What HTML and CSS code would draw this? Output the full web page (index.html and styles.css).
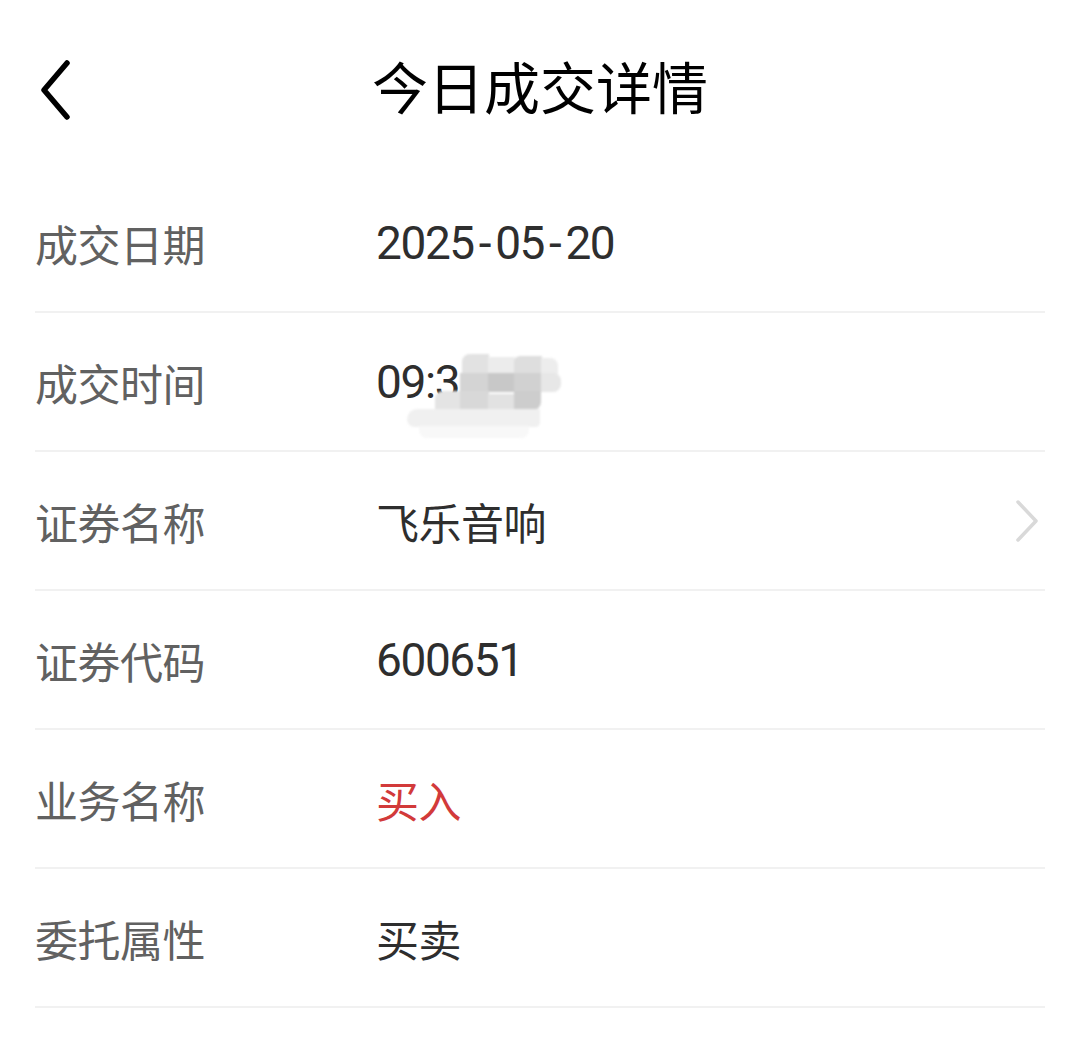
FILE: index.html
```html
<!DOCTYPE html>
<html lang="zh-CN">
<head>
<meta charset="utf-8">
<title>今日成交详情</title>
<link rel="stylesheet" href="styles.css">
</head>
<body>
<div class="page">
  <header class="header">
    <button class="back" aria-label="返回">
      <svg width="40" height="60" viewBox="0 0 40 60"><path d="M31 3 L8 30 L31 57" fill="none" stroke="#000" stroke-width="5.5" stroke-linecap="round" stroke-linejoin="round"/></svg>
    </button>
    <h1 class="title">今日成交详情</h1>
  </header>
  <ul class="list">
    <li class="row"><span class="label">成交日期</span><span class="value num">2025<span class="dash">-</span>05<span class="dash">-</span>20</span></li>
    <li class="row"><span class="label">成交时间</span><span class="value num"><span class="masked">09:3<span class="mosaic" aria-hidden="true">
      <i class="m a1"></i><i class="m a2"></i><i class="m a3"></i><i class="m a4"></i><i class="m b1"></i><i class="m b2"></i><i class="m b3"></i><i class="m b4"></i><i class="m k0"></i><i class="m k1"></i><i class="m k2"></i><i class="m k3"></i><i class="m d1"></i><i class="m e1"></i>
    </span></span></span></li>
    <li class="row"><span class="label">证券名称</span><span class="value">飞乐音响</span>
      <svg class="arrow" width="26" height="44" viewBox="0 0 26 44"><path d="M4 3 L22 22 L4 41" fill="none" stroke="#d9d9d9" stroke-width="3.5" stroke-linecap="round" stroke-linejoin="round"/></svg>
    </li>
    <li class="row"><span class="label">证券代码</span><span class="value num">600651</span></li>
    <li class="row"><span class="label">业务名称</span><span class="value red">买入</span></li>
    <li class="row"><span class="label">委托属性</span><span class="value">买卖</span></li>
  </ul>
</div>
</body>
</html>
```
FILE: styles.css
```css
* { box-sizing: border-box; }
html, body { margin: 0; padding: 0; background: #fff; }
body {
  font-family: "Noto Sans CJK SC", "Noto Sans", sans-serif;
  width: 1080px;
  height: 1037px;
  overflow: hidden;
}
.header {
  position: relative;
  height: 174px;
  display: flex;
  align-items: center;
  justify-content: center;
}
.back {
  position: absolute;
  left: 36px;
  top: 60px;
  padding: 0;
  border: 0;
  background: none;
  line-height: 0;
}
.title {
  margin: 0;
  margin-top: -4px;
  font-size: 56px;
  font-weight: 400;
  color: #000;
  line-height: 1;
}
.list {
  list-style: none;
  margin: 0;
  padding: 0 35px;
}
.row {
  display: flex;
  align-items: center;
  height: 139px;
  border-bottom: 2px solid #f1f1f1;
}
.label {
  width: 341px;
  flex: none;
  font-size: 43px;
  color: #616161;
  letter-spacing: -0.5px;
}
.value {
  flex: 1;
  font-size: 43px;
  color: #2e2e2e;
  letter-spacing: -0.5px;
}
.num {
  font-family: Roboto, "Noto Sans", sans-serif;
  font-size: 46px;
  letter-spacing: -1.4px;
}
.dash { margin: 0 5px; }
.red { color: #d23a3a; }
.arrow { flex: none; margin-right: 5px; }
.masked { position: relative; display: inline-block; }
.mosaic {
  position: absolute;
  left: 29px;
  top: -1px;
  width: 160px;
  height: 86px;
  filter: blur(0.8px);
}
.m { position: absolute; display: block; }
.a1 { left: 57px; top: 0; width: 27px; height: 20px; background: #e2e2e2; border-radius: 8px 0 0 0; }
.a2 { left: 83px; top: 3px; width: 27px; height: 17px; background: #ececec; }
.a3 { left: 109px; top: 2px; width: 28px; height: 18px; background: #dedede; border-radius: 6px 0 0 0; }
.a4 { left: 136px; top: 4px; width: 17px; height: 16px; background: #ededed; border-radius: 0 8px 0 0; }
.b1 { left: 55px; top: 19px; width: 29px; height: 19px; background: #d4d4d4; }
.b2 { left: 83px; top: 19px; width: 27px; height: 19px; background: #c8c8c8; }
.b3 { left: 109px; top: 19px; width: 28px; height: 19px; background: #d1d1d1; }
.b4 { left: 136px; top: 19px; width: 20px; height: 19px; background: #e7e7e7; border-radius: 0 8px 8px 0; }
.k0 { left: 30px; top: 37px; width: 26px; height: 19px; background: #e4e4e4; border-radius: 8px 0 0 0; }
.k1 { left: 55px; top: 37px; width: 29px; height: 19px; background: #d8d8d8; }
.k2 { left: 83px; top: 40px; width: 27px; height: 16px; background: #e2e2e2; }
.k3 { left: 109px; top: 37px; width: 27px; height: 19px; background: #cdcdcd; border-radius: 0 0 8px 0; }
.d1 { left: 2px; top: 55px; width: 133px; height: 18px; background: #f0f0f0; border-radius: 14px 0 6px 10px; }
.e1 { left: 14px; top: 72px; width: 110px; height: 12px; background: #f8f8f8; border-radius: 0 0 8px 8px; }
```
